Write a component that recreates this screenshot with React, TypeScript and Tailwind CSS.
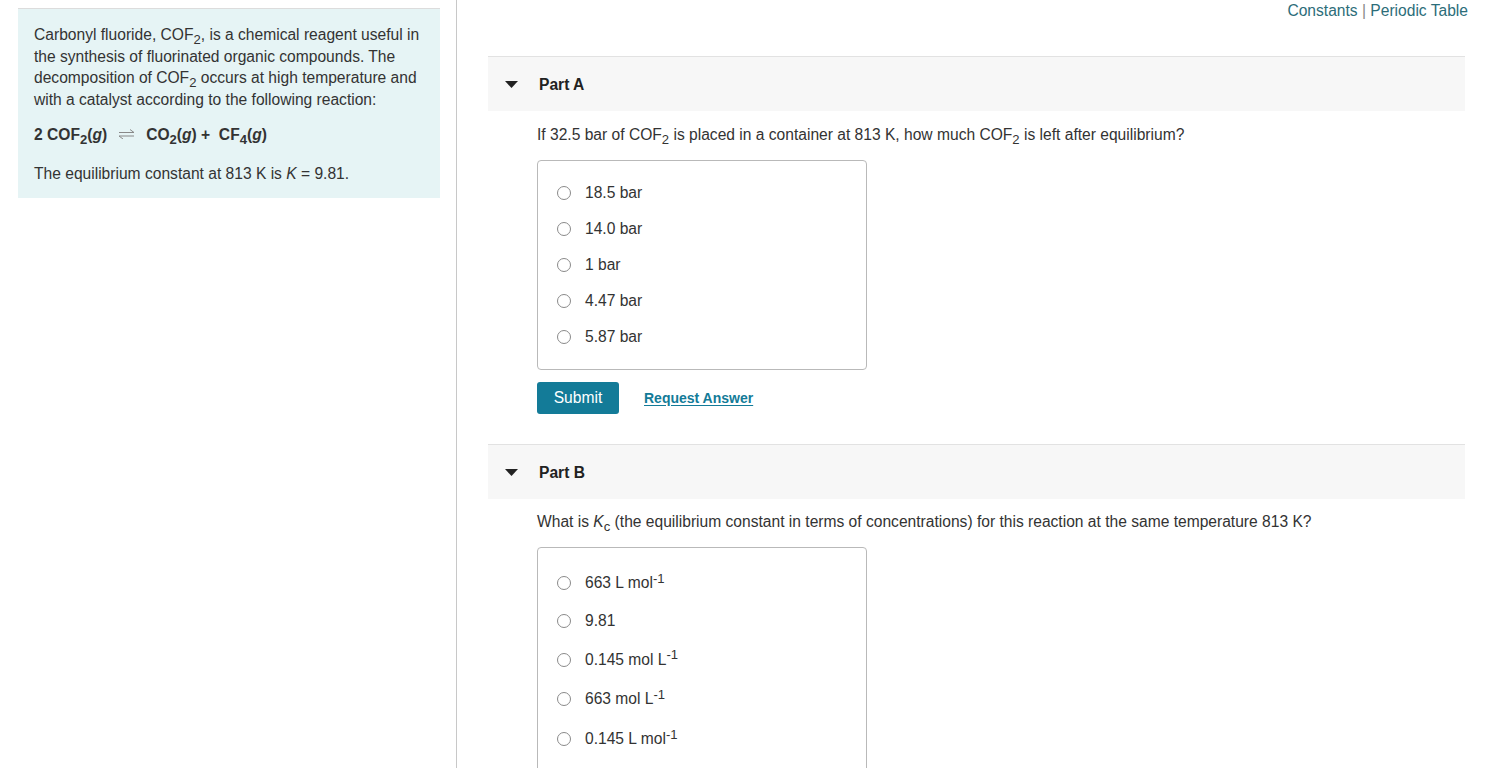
import React from "react";

const Sub = ({ children }: { children: React.ReactNode }) => (
  <span className="relative top-[0.28em] text-[0.84em] leading-none">{children}</span>
);
const Sup = ({ children }: { children: React.ReactNode }) => (
  <span className="relative -top-[0.42em] text-[0.84em] leading-none">{children}</span>
);

const Radio = () => (
  <span className="inline-block w-[14px] h-[14px] rounded-full border border-[#8a8a8a] bg-white shrink-0" />
);

const Option = ({ children, h }: { children: React.ReactNode; h: string }) => (
  <div className={`flex items-center ${h} pl-[19px]`}>
    <Radio />
    <div className="ml-[14px] text-[15.6px] text-[#333]">{children}</div>
  </div>
);

const PartHeader = ({ title }: { title: string }) => (
  <div className="flex items-center h-[55px] bg-[#f7f7f7] border-t border-[#e2e2e2] pl-[17px]">
    <svg width="13" height="8" viewBox="0 0 13 8" className="mr-[21px] mt-[1px]">
      <polygon points="0,0 13,0 6.5,7" fill="#222" />
    </svg>
    <span className="text-[15.6px] font-bold text-[#222] mt-[1px]">{title}</span>
  </div>
);

const EqArrow = () => (
  <svg width="17" height="10" viewBox="0 0 17 10" className="inline-block mx-[11px] align-[1px]">
    <path d="M1 3.5 H16 L12 0.5" fill="none" stroke="#888" strokeWidth="1" />
    <path d="M16 7 H1 L5 10" fill="none" stroke="#888" strokeWidth="1" />
  </svg>
);

export default function App() {
  return (
    <div
      className="flex w-[1493px] h-[768px] overflow-hidden bg-white text-[#333]"
      style={{ fontFamily: '"Liberation Sans", Arial, sans-serif' }}
    >
      {/* Left column */}
      <div className="w-[457px] shrink-0 border-r border-[#c8c8c8] pt-[8px] pl-[18px]">
        <div className="w-[422px] bg-[#e6f4f5] border-t border-[#dcdcdc] pl-[16px] pr-[10px] pt-[15px] pb-[14px] text-[15.6px] text-[#333]">
          <p className="leading-[21.5px]">
            Carbonyl fluoride, COF<Sub>2</Sub>, is a chemical reagent useful in the synthesis of
            fluorinated organic compounds. The decomposition of COF<Sub>2</Sub> occurs at high
            temperature and with a catalyst according to the following reaction:
          </p>
          <p className="mt-[14px] font-bold leading-[21px]">
            2 COF<Sub>2</Sub>(<i>g</i>)
            <EqArrow />
            CO<Sub>2</Sub>(<i>g</i>) + &nbsp;CF<Sub>4</Sub>(<i>g</i>)
          </p>
          <p className="mt-[18px] leading-[21px]">
            The equilibrium constant at 813 K is <i>K</i> = 9.81.
          </p>
        </div>
      </div>

      {/* Right column */}
      <div className="flex-1 pl-[31px] pr-[28px]">
        <div className="flex justify-end h-[56px] pt-[1px] -mr-[3px]">
          <div className="text-[15.6px] text-[#2c6d79] leading-[20px]">
            Constants <span className="text-[#888]">|</span> Periodic Table
          </div>
        </div>

        <PartHeader title="Part A" />
        <div className="pl-[49px]">
          <p className="mt-[14px] text-[15.6px] leading-[20px] text-[#333]">
            If 32.5 bar of COF<Sub>2</Sub> is placed in a container at 813 K, how much COF
            <Sub>2</Sub> is left after equilibrium?
          </p>
          <div className="mt-[15px] w-[330px] border border-[#b9b9b9] rounded-[4px] py-[14px]">
            <Option h="h-[36px]">18.5 bar</Option>
            <Option h="h-[36px]">14.0 bar</Option>
            <Option h="h-[36px]">1 bar</Option>
            <Option h="h-[36px]">4.47 bar</Option>
            <Option h="h-[36px]">5.87 bar</Option>
          </div>
          <div className="flex items-center mt-[12px] h-[32px]">
            <button className="h-[32px] w-[82px] rounded-[3px] bg-[#137b98] text-white text-[15.6px]">
              Submit
            </button>
            <span className="ml-[25px] text-[14px] font-bold text-[#137b98] underline underline-offset-2">
              Request Answer
            </span>
          </div>
        </div>

        <div className="mt-[30px]">
          <PartHeader title="Part B" />
        </div>
        <div className="pl-[49px]">
          <p className="mt-[13px] text-[15.6px] leading-[20px] text-[#333]">
            What is <i>K</i>
            <Sub>c</Sub> (the equilibrium constant in terms of concentrations) for this reaction at
            the same temperature 813 K?
          </p>
          <div className="mt-[15px] w-[330px] h-[260px] border border-[#b9b9b9] rounded-[4px] pt-[16px]">
            <Option h="h-[38px]">
              663 L mol<Sup>-1</Sup>
            </Option>
            <Option h="h-[38px]">9.81</Option>
            <Option h="h-[39px]">
              0.145 mol L<Sup>-1</Sup>
            </Option>
            <Option h="h-[40px]">
              663 mol L<Sup>-1</Sup>
            </Option>
            <Option h="h-[40px]">
              0.145 L mol<Sup>-1</Sup>
            </Option>
          </div>
        </div>
      </div>
    </div>
  );
}
